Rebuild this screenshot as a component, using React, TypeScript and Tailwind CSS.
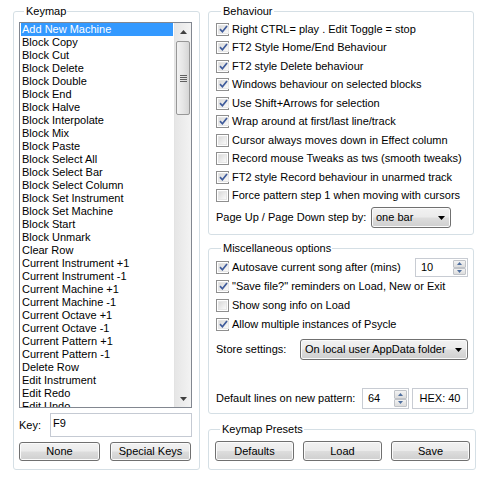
import React from 'react'

const keymap = [
  'Add New Machine',
  'Block Copy',
  'Block Cut',
  'Block Delete',
  'Block Double',
  'Block End',
  'Block Halve',
  'Block Interpolate',
  'Block Mix',
  'Block Paste',
  'Block Select All',
  'Block Select Bar',
  'Block Select Column',
  'Block Set Instrument',
  'Block Set Machine',
  'Block Start',
  'Block Unmark',
  'Clear Row',
  'Current Instrument +1',
  'Current Instrument -1',
  'Current Machine +1',
  'Current Machine -1',
  'Current Octave +1',
  'Current Octave -1',
  'Current Pattern +1',
  'Current Pattern -1',
  'Delete Row',
  'Edit Instrument',
  'Edit Redo',
  'Edit Undo',
]

const behaviour: [string, boolean][] = [
  ['Right CTRL= play . Edit Toggle = stop', true],
  ['FT2 Style Home/End Behaviour', true],
  ['FT2 style Delete behaviour', true],
  ['Windows behaviour on selected blocks', true],
  ['Use Shift+Arrows for selection', true],
  ['Wrap around at first/last line/track', true],
  ['Cursor always moves down in Effect column', false],
  ['Record mouse Tweaks as tws (smooth tweaks)', false],
  ['FT2 style Record behaviour in unarmed track', true],
  ['Force pattern step 1 when moving with cursors', false],
]

function GroupBox({ title, className = '', children }: { title: string; className?: string; children: React.ReactNode }) {
  return (
    <fieldset className={`border border-[#d5dfe5] rounded-[3px] ${className}`}>
      <legend className="ml-[5px] pl-[2px] pr-[1px] leading-[14px]">{title}</legend>
      {children}
    </fieldset>
  )
}

function CheckBox({ checked }: { checked: boolean }) {
  return (
    <span className="w-[13px] h-[13px] shrink-0 border border-[#8f8f8f] bg-white p-[1px] flex">
      <span className="flex-1 flex items-center justify-center bg-gradient-to-br from-[#dadada] to-[#fafafa] border border-[#e6e6e6]">
        {checked && (
          <svg width="9" height="9" viewBox="0 0 9 9">
            <path d="M1 4.2 L3.4 6.8 L8 1" fill="none" stroke="#3f5b9b" strokeWidth="1.7" />
          </svg>
        )}
      </span>
    </span>
  )
}

function CheckRow({ label, checked, className = '' }: { label: string; checked: boolean; className?: string }) {
  return (
    <div className={`flex items-center gap-[3px] ${className}`}>
      <CheckBox checked={checked} />
      <span className="whitespace-nowrap">{label}</span>
    </div>
  )
}

function Button({ label, className = '' }: { label: string; className?: string }) {
  return (
    <div
      className={`flex items-center justify-center border border-[#707070] rounded-[3px] bg-[linear-gradient(#f2f2f2_0%,#ebebeb_48%,#dddddd_52%,#cfcfcf_100%)] shadow-[inset_0_0_0_1px_#fbfbfb] ${className}`}
    >
      {label}
    </div>
  )
}

function Combo({ value, className = '' }: { value: string; className?: string }) {
  return (
    <div
      className={`flex items-center justify-between pl-[4px] pr-[5px] border border-[#707070] rounded-[3px] bg-[linear-gradient(#f2f2f2_0%,#ebebeb_48%,#dddddd_52%,#cfcfcf_100%)] shadow-[inset_0_0_0_1px_#fbfbfb] ${className}`}
    >
      <span className="whitespace-nowrap">{value}</span>
      <svg width="7" height="4" viewBox="0 0 7 4">
        <path d="M0 0 H7 L3.5 4 Z" fill="#000" />
      </svg>
    </div>
  )
}

function SpinHalf({ up }: { up?: boolean }) {
  return (
    <div className="flex-1 flex items-center justify-center border border-[#c0c3c8] rounded-[1px] bg-gradient-to-b from-[#f3f3f3] to-[#dcdcdc]">
      <svg width="5" height="3" viewBox="0 0 5 3">
        <path d={up ? 'M0 3 H5 L2.5 0 Z' : 'M0 0 H5 L2.5 3 Z'} fill="#4f6f9f" />
      </svg>
    </div>
  )
}

function Spin({ value, className = '' }: { value: string; className?: string }) {
  return (
    <div className={`flex border border-[#c8ccd3] bg-white p-[1px] ${className}`}>
      <span className="flex-1 flex items-center pl-[4px]">{value}</span>
      <div className="w-[13px] flex flex-col">
        <SpinHalf up />
        <SpinHalf />
      </div>
    </div>
  )
}

function ScrollBar() {
  return (
    <div className="w-[17px] flex flex-col bg-gradient-to-r from-[#e6e6e6] to-[#f3f3f3] border-l border-[#e3e3e3]">
      <div className="h-[17px] flex items-center justify-center">
        <svg width="7" height="4" viewBox="0 0 7 4">
          <path d="M0 4 H7 L3.5 0 Z" fill="#404040" />
        </svg>
      </div>
      <div className="mt-[1px] mx-[1px] h-[74px] flex flex-col items-center justify-center gap-[1px] border border-[#979797] rounded-[2px] bg-gradient-to-r from-[#f2f2f2] via-[#e6e6e6] to-[#d6d6d6]">
        <span className="w-[7px] h-[1px] bg-[#606060]" />
        <span className="w-[7px] h-[1px] bg-[#606060]" />
        <span className="w-[7px] h-[1px] bg-[#606060]" />
        <span className="w-[7px] h-[1px] bg-[#606060]" />
      </div>
      <div className="flex-1" />
      <div className="h-[17px] flex items-center justify-center">
        <svg width="7" height="4" viewBox="0 0 7 4">
          <path d="M0 0 H7 L3.5 4 Z" fill="#404040" />
        </svg>
      </div>
    </div>
  )
}

export default function App() {
  return (
    <div className="w-[485px] h-[477px] overflow-hidden bg-white text-black text-[11px] leading-[13px] font-['Liberation_Sans',Arial,sans-serif] flex gap-[8px] pl-[13px] pt-[4px]">
      <GroupBox title="Keymap" className="w-[187px] self-start pl-[5px] pr-[7px] pb-[8px]">
        <div className="mt-[4px] h-[386px] border border-[#828790] flex">
          <div className="flex-1 pl-[1px] pr-[1px] overflow-hidden">
            {keymap.map((k, i) => (
              <div
                key={k}
                className={`h-[13px] pl-[1px] whitespace-nowrap ${i === 0 ? 'bg-[#3399ff] text-white' : ''}`}
              >
                {k}
              </div>
            ))}
          </div>
          <ScrollBar />
        </div>
        <div className="mt-[5px] flex items-center">
          <span>Key:</span>
          <div className="ml-[9px] flex-1 h-[24px] border border-[#c5cad3] bg-white pl-[2px] flex items-start pt-[3px]">
            <span>F9</span>
          </div>
        </div>
        <div className="mt-[5px] flex gap-[10px]">
          <Button label="None" className="w-[81px] h-[19px]" />
          <Button label="Special Keys" className="w-[81px] h-[19px]" />
        </div>
      </GroupBox>

      <div className="w-[266px] flex flex-col">
        <GroupBox title="Behaviour" className="pl-[7px] pr-[5px] pb-[6px]">
          <div className="mt-[2px]">
            {behaviour.map(([label, checked]) => (
              <CheckRow key={label} label={label} checked={checked} className="h-[18.5px]" />
            ))}
          </div>
          <div className="mt-[2px] flex items-center">
            <span className="w-[155px] whitespace-nowrap">Page Up / Page Down step by:</span>
            <Combo value="one bar" className="w-[80px] h-[21px]" />
          </div>
        </GroupBox>

        <GroupBox title="Miscellaneous options" className="mt-[6px] pl-[7px] pr-[5px] pb-[4px]">
          <div className="mt-[3px]">
            <div className="h-[19px] flex items-center justify-between">
              <CheckRow label="Autosave current song after (mins)" checked />
              <Spin value="10" className="w-[53px] h-[19px]" />
            </div>
            <CheckRow label={'"Save file?" reminders on Load, New or Exit'} checked className="h-[19px]" />
            <CheckRow label="Show song info on Load" checked={false} className="h-[19px]" />
            <CheckRow label="Allow multiple instances of Psycle" checked className="h-[19px]" />
          </div>
          <div className="mt-[5px] flex items-center">
            <span className="w-[84px] whitespace-nowrap">Store settings:</span>
            <Combo value="On local user AppData folder" className="flex-1 h-[21px]" />
          </div>
          <div className="mt-[28px] flex items-center">
            <span className="w-[146px] whitespace-nowrap">Default lines on new pattern:</span>
            <Spin value="64" className="w-[47px] h-[21px]" />
            <div className="ml-[3px] flex-1 h-[21px] flex items-center justify-center border border-[#c8ccd3]">HEX: 40</div>
          </div>
        </GroupBox>

        <GroupBox title="Keymap Presets" className="mt-[8px] pl-[6px] pr-[5px] pb-[8px]">
          <div className="mt-[5px] flex gap-[9px]">
            <Button label="Defaults" className="w-[79px] h-[20px]" />
            <Button label="Load" className="w-[79px] h-[20px]" />
            <Button label="Save" className="w-[79px] h-[20px]" />
          </div>
        </GroupBox>
      </div>
    </div>
  )
}
